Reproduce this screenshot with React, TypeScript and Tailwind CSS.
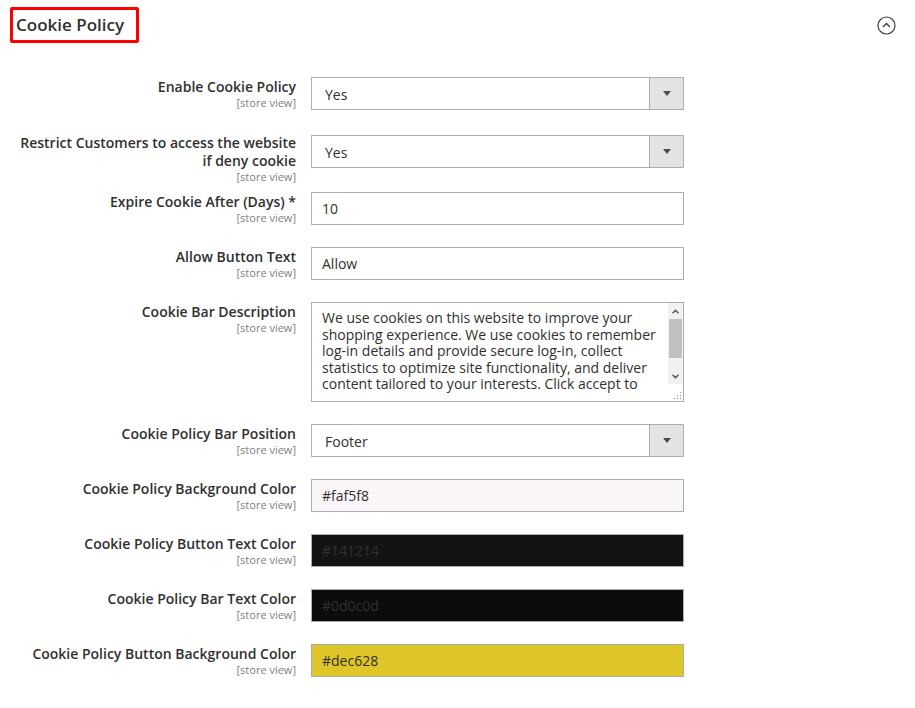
import type { ReactNode } from 'react'

function Row({
  label,
  mt,
  labelShift = 'mt-[1px]',
  children,
}: {
  label: ReactNode
  mt: string
  labelShift?: string
  children: ReactNode
}) {
  return (
    <div className={`flex items-start ${mt}`}>
      <div className={`w-[296px] shrink-0 text-right ${labelShift}`}>
        <div className="text-[14px] font-semibold leading-[18px] text-[#303030]">{label}</div>
        <div className="text-[11px] leading-[13px] text-[#808080]">[store view]</div>
      </div>
      <div className="ml-[15px] w-[373px] shrink-0">{children}</div>
    </div>
  )
}

function Select({ value }: { value: string }) {
  return (
    <div className="flex h-[33px] border border-[#adadad] bg-white">
      <div className="flex flex-1 items-center pl-[13px] pt-[1px] text-[14px] text-[#303030]">{value}</div>
      <div className="flex w-[34px] items-center justify-center border-l border-[#adadad] bg-[#e3e3e3]">
        <svg width="8" height="5" viewBox="0 0 8 5">
          <path d="M0 0h8L4 5z" fill="#514943" />
        </svg>
      </div>
    </div>
  )
}

function Input({ value, bg = 'bg-white' }: { value: string; bg?: string }) {
  return (
    <div className={`flex h-[33px] items-center border border-[#adadad] px-[10px] text-[14px] text-[#303030] ${bg}`}>
      {value}
    </div>
  )
}

function TextArea() {
  return (
    <div className="flex h-[100px] border border-[#adadad] bg-white">
      <div className="flex-1 pl-[10px] pr-[4px] pt-[7px]">
        <div className="h-[84px] overflow-hidden text-[14px] leading-[16.6px] text-[#303030]">
          We use cookies on this website to improve your shopping experience. We use cookies to remember
          log-in details and provide secure log-in, collect statistics to optimize site functionality, and deliver
          content tailored to your interests. Click accept to continue to use our website.
        </div>
      </div>
      <div className="flex w-[15px] flex-col">
        <div className="flex h-[81px] flex-col bg-[#f1f1f1]">
          <div className="flex h-[16px] items-center justify-center">
            <svg width="7" height="5" viewBox="0 0 7 5">
              <path d="M0.5 4.2L3.5 1.2L6.5 4.2" stroke="#505050" strokeWidth="1.4" fill="none" />
            </svg>
          </div>
          <div className="mx-[1px] h-[39px] bg-[#c1c1c1]" />
          <div className="flex-1" />
          <div className="flex h-[16px] items-center justify-center">
            <svg width="7" height="5" viewBox="0 0 7 5">
              <path d="M0.5 0.8L3.5 3.8L6.5 0.8" stroke="#505050" strokeWidth="1.4" fill="none" />
            </svg>
          </div>
        </div>
        <div className="flex flex-1 items-end justify-end pb-[1px] pr-[1px]">
          <svg width="8" height="8" viewBox="0 0 8 8">
            <g fill="#9a9a9a">
              <rect x="6" y="0" width="1.2" height="1.2" />
              <rect x="3" y="3" width="1.2" height="1.2" />
              <rect x="6" y="3" width="1.2" height="1.2" />
              <rect x="0" y="6" width="1.2" height="1.2" />
              <rect x="3" y="6" width="1.2" height="1.2" />
              <rect x="6" y="6" width="1.2" height="1.2" />
            </g>
          </svg>
        </div>
      </div>
    </div>
  )
}

export default function App() {
  return (
    <div className="h-[708px] w-[915px] overflow-hidden bg-white font-['Open_Sans',sans-serif] text-[#303030]">
      <div className="flex items-start justify-between pl-[10px] pr-[19px] pt-[7px]">
        <div className="flex h-[36px] w-[129px] items-center rounded-[2px] border-[3px] border-[#ff0000] pl-[3px]">
          <span className="text-[17px] font-semibold text-[#303030]">Cookie Policy</span>
        </div>
        <svg className="mt-[9px]" width="19" height="19" viewBox="0 0 19 19">
          <circle cx="9.5" cy="9.5" r="8.5" stroke="#3d3d3d" strokeWidth="1.2" fill="none" />
          <path d="M6 11L9.5 7.5L13 11" stroke="#3d3d3d" strokeWidth="1.3" fill="none" />
        </svg>
      </div>

      <div className="flex flex-col">
        <Row label="Enable Cookie Policy" mt="mt-[34px]">
          <Select value="Yes" />
        </Row>
        <Row
          label={
            <>
              Restrict Customers to access the website
              <br />
              if deny cookie
            </>
          }
          mt="mt-[25px]"
          labelShift="-mt-[1px]"
        >
          <Select value="Yes" />
        </Row>
        <Row label="Expire Cookie After (Days) *" mt="mt-[9px]">
          <Input value="10" />
        </Row>
        <Row label="Allow Button Text" mt="mt-[22px]">
          <Input value="Allow" />
        </Row>
        <Row label="Cookie Bar Description" mt="mt-[22px]">
          <TextArea />
        </Row>
        <Row label="Cookie Policy Bar Position" mt="mt-[22px]">
          <Select value="Footer" />
        </Row>
        <Row label="Cookie Policy Background Color" mt="mt-[22px]">
          <Input value="#faf5f8" bg="bg-[#faf5f8]" />
        </Row>
        <Row label="Cookie Policy Button Text Color" mt="mt-[22px]">
          <Input value="#141214" bg="bg-[#141214]" />
        </Row>
        <Row label="Cookie Policy Bar Text Color" mt="mt-[22px]">
          <Input value="#0d0c0d" bg="bg-[#0d0c0d]" />
        </Row>
        <Row label="Cookie Policy Button Background Color" mt="mt-[22px]">
          <Input value="#dec628" bg="bg-[#dec628]" />
        </Row>
      </div>
    </div>
  )
}
